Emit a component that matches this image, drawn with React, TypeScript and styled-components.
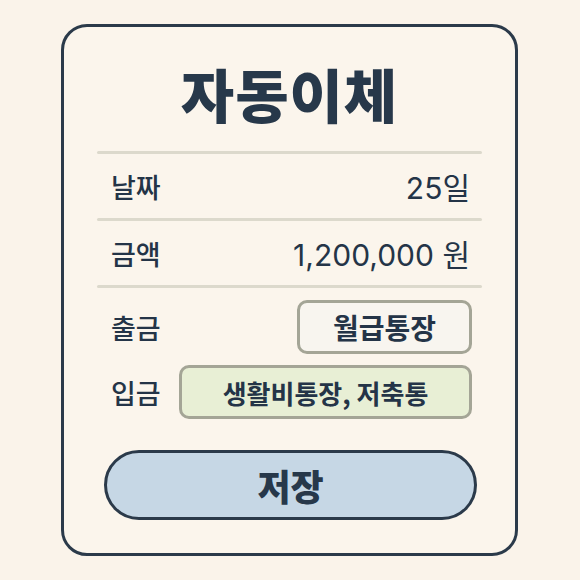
import React from 'react'
import styled, { createGlobalStyle } from 'styled-components'

const GlobalStyle = createGlobalStyle`
  html, body {
    margin: 0;
    padding: 0;
    background: #faf3ea;
  }
  body {
    font-family: "Noto Sans CJK KR", "Noto Sans", sans-serif;
    color: #243447;
  }
`

const rows = [
  { label: '날짜', value: '25일' },
  { label: '금액', value: '1,200,000 원' },
]

const App: React.FC = () => {
  return (
    <>
      <GlobalStyle />
      <Page>
        <Card>
          <Title>자동이체</Title>
          <Divider />
          {rows.map(row => (
            <React.Fragment key={row.label}>
              <Row>
                <Label>{row.label}</Label>
                <Value>{row.value}</Value>
              </Row>
              <Divider />
            </React.Fragment>
          ))}
          <AccountRow>
            <Label>출금</Label>
            <AccountBox tone="plain">월급통장</AccountBox>
          </AccountRow>
          <AccountRow>
            <Label>입금</Label>
            <AccountBox tone="green" wide>생활비통장, 저축통</AccountBox>
          </AccountRow>
          <SaveButton>저장</SaveButton>
        </Card>
      </Page>
    </>
  )
}

export default App

const Page = styled.div`
  width: 580px;
  height: 580px;
  box-sizing: border-box;
  padding: 24px 62px 24px 61px;
`

const Card = styled.div`
  box-sizing: border-box;
  height: 532px;
  border: 3px solid #2b3a4a;
  border-radius: 26px;
  background: #fbf5ec;
  padding: 26px 33px 0 33px;
  display: flex;
  flex-direction: column;
`

const Title = styled.h1`
  margin: 0;
  height: 98px;
  line-height: 80px;
  text-align: center;
  font-size: 58px;
  font-weight: 900;
  letter-spacing: 1px;
  color: #27384a;
`

const Divider = styled.div`
  height: 3px;
  background: #dcd9cc;
  border-radius: 2px;
`

const Row = styled.div`
  height: 64px;
  display: flex;
  align-items: center;
  justify-content: space-between;
  padding: 0 12px 0 14px;
`

const Label = styled.span`
  font-size: 27px;
  font-weight: 500;
  color: #243447;
`

const Value = styled.span`
  font-family: Inter, "Noto Sans CJK KR", sans-serif;
  font-size: 30px;
  font-weight: 400;
  color: #243447;
`

const AccountRow = styled.div`
  display: flex;
  align-items: center;
  justify-content: space-between;
  padding: 0 10px 0 14px;
  margin-top: 12px;
  & + & {
    margin-top: 11px;
  }
`

const AccountBox = styled.div<{ tone: 'plain' | 'green'; wide?: boolean }>`
  box-sizing: border-box;
  width: ${p => (p.wide ? '293px' : '175px')};
  height: 54px;
  border: 3px solid #a4a596;
  border-radius: 10px;
  background: ${p => (p.tone === 'green' ? '#e8efd5' : '#f8f5ef')};
  display: flex;
  align-items: center;
  justify-content: center;
  font-size: ${p => (p.wide ? '26px' : '28px')};
  font-weight: 700;
  color: #243447;
  white-space: nowrap;
  overflow: hidden;
`

const SaveButton = styled.button`
  margin: 31px 5px 0 7px;
  height: 70px;
  box-sizing: border-box;
  border: 3px solid #2b3a4a;
  border-radius: 35px;
  background: #c6d7e5;
  font-family: "Noto Sans CJK KR", "Noto Sans", sans-serif;
  font-size: 36px;
  font-weight: 900;
  color: #27384a;
  cursor: pointer;
`
